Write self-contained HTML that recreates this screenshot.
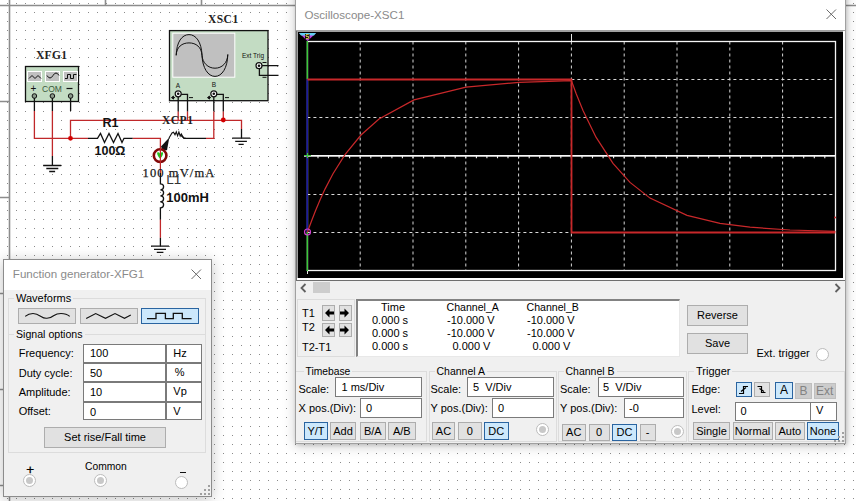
<!DOCTYPE html>
<html><head><meta charset="utf-8"><style>
*{box-sizing:border-box}
body{margin:0;width:856px;height:501px;overflow:hidden;position:relative;background:#fff;font-family:"Liberation Sans",sans-serif;color:#000}
.a{position:absolute;white-space:nowrap}
.t{position:absolute;white-space:nowrap;font-size:11px;line-height:13px}
.box{position:absolute;background:#fff;border:1px solid #7a7a7a}
.btn{position:absolute;background:#e1e1e1;border:1px solid #adadad;font-size:11px;text-align:center;white-space:nowrap}
.sel{background:#cce8fc;border-color:#2a64a0}
.grp{position:absolute;border:1px solid #dcdcdc}
.rad{position:absolute;width:13px;height:13px;border-radius:50%;border:1px solid #bcbcbc;background:#fff}
.rad.dis:after{content:"";position:absolute;left:2px;top:2px;width:7px;height:7px;border-radius:50%;background:#c8c8c8}
</style></head><body>
<svg class="a" style="left:0;top:0" width="856" height="501" viewBox="0 0 856 501">
<defs><pattern id="dots" x="7" y="3" width="9" height="9" patternUnits="userSpaceOnUse"><rect width="1" height="1" fill="#8a8a8a"/></pattern></defs>
<rect width="856" height="501" fill="url(#dots)"/>
<g stroke="#8c8c8c" stroke-width="1.6" fill="none">
<path d="M9.5 0V501M0 5.5H856M105.5 0V5.5M201.5 0V5.5M0 101.5H9.5M0 197.5H9.5M0 293.5H9.5M0 389.5H9.5M0 485.5H9.5"/>
</g>
<text x="36" y="59" font-family="'Liberation Serif'" font-weight="bold" font-size="11.5" letter-spacing="0.3" fill="#222">XFG1</text>
<rect x="25.5" y="66.5" width="53" height="35" fill="#c3dcc3" stroke="#111" stroke-width="1.3"/>
<g fill="#c0c0c0" stroke="#fff" stroke-width="1"><rect x="27.5" y="71.5" width="14" height="10"/><rect x="45.5" y="71.5" width="14" height="10"/><rect x="63.5" y="71.5" width="14" height="10"/></g>
<g fill="none" stroke="#111" stroke-width="1">
<path d="M29 78.5l3-3 3 3 3-3 3 3"/>
<path d="M47 75.5q3 5 6 0t6 0"/>
<path d="M65 78.5h2.5v-4h3v4h3v-4h3"/>
</g>
<text x="30.5" y="92" font-family="'Liberation Sans'" font-size="10" fill="#111">+</text>
<text x="42" y="91.5" font-family="'Liberation Sans'" font-size="8.5" fill="#3a5a3a">COM</text>
<path d="M66.5 88.5h6" stroke="#111" stroke-width="1.2"/>
<g fill="#8a9a8a" stroke="#111" stroke-width="1"><circle cx="34.4" cy="96" r="2.3"/><circle cx="52.4" cy="96" r="2.3"/><circle cx="70.6" cy="96" r="2.3"/></g>
<g fill="none" stroke-width="1.3">
<path stroke="#111" d="M34.4 98V111M52.4 98V111M70.6 98V111"/>
<path stroke="#c0282a" d="M34.4 111V138.3H88M52.4 111V156M70.5 138.3V120.3H241.5V129M132.7 138.3H160.4V148"/>
<path stroke="#111" d="M52.4 156V165.5M88 138.3H97.5L100.5 133.5L104.5 142.5L109 133.5L113.5 142.5L118 133.5L122 142.5L124 138.3H132.7"/>
<path stroke="#111" d="M43.2 165.5H61.2M46.3 168.5H58.3M49.2 171.5H55.1"/>
<path stroke="#111" d="M241.5 129V138.2M232.2 138.2H250.1M235.2 141.4H246.9M238.5 144.4H243.7"/>
<path stroke="#111" d="M178.2 96V111.6M187.5 94.4V111.6M178.2 94.4H187.5M213.8 96V111.6M223.3 94.4V111.6M213.8 94.4H223.3"/>
<path stroke="#c0282a" d="M178.2 111.6V120.3M187.5 111.6V120.3M223.3 111.6V120.3M213.8 111.6V138.3H206"/>
<path stroke="#111" d="M206 138.3H184.3L181 135.5"/>
<path stroke="#111" d="M160.4 208V219.7M160.4 237.7V246.2M151 246.2H169M154 249.4H166M156.8 252.4H163.4"/>
<path stroke="#111" d="M160.4 173V183.8q3.2 0 3.2 3q0 3-3.2 3q3.2 0 3.2 3q0 3-3.2 3q3.2 0 3.2 3q0 3-3.2 3q3.2 0 3.2 3q0 3-3.2 3V208"/>
</g>
<g stroke="#c0282a" stroke-width="1.3" fill="none"><path d="M160.4 219.7V237.7"/></g>
<circle cx="70.5" cy="138.3" r="2.4" fill="#d40000"/>
<circle cx="223.3" cy="120" r="2.4" fill="#d40000"/>
<path d="M169 138L172 133L173.5 132.2L175 134.8L176.3 131.8L177.6 135.8L178.9 132L180.2 136L181.3 134L183.7 138.3H186" fill="none" stroke="#111" stroke-width="1.1"/>
<path d="M169.3 137.6L161 146.6L162.5 150L167 150.2z" fill="#111"/>
<circle cx="160.1" cy="155.6" r="6.3" fill="#fff" stroke="#820808" stroke-width="2.6"/>
<path d="M157.2 152.6q1.5-.8 2.9 1.2q1.4-2 2.9-1.2q.6 2.5-2.9 6.2q-3.5-3.7-2.9-6.2z" fill="#1ec81e"/>
<path d="M160.4 148V173" stroke="#c0282a" stroke-width="1.2"/>
<text x="102.5" y="126.6" font-family="'Liberation Sans'" font-weight="bold" font-size="12.5" fill="#111">R1</text>
<text x="94.5" y="155.3" font-family="'Liberation Sans'" font-weight="bold" font-size="12.5" fill="#111">100Ω</text>
<text x="162" y="123.6" font-family="'Liberation Serif'" font-weight="bold" font-size="11.5" letter-spacing="0.5" fill="#222">XCP1</text>
<text x="142.6" y="176.7" font-family="'Liberation Serif'" font-size="12.5" letter-spacing="1.1" fill="#1a1a1a" stroke="#1a1a1a" stroke-width="0.25">100 mV/mA</text>
<text x="166.3" y="184.3" font-family="'Liberation Sans'" font-size="13.5" fill="#333">L1</text>
<text x="166.3" y="201.7" font-family="'Liberation Sans'" font-weight="bold" font-size="13" fill="#111">100mH</text>
<text x="207.9" y="22.5" font-family="'Liberation Serif'" font-weight="bold" font-size="11.5" letter-spacing="0.5" fill="#222">XSC1</text>
<rect x="169.5" y="30.6" width="98.5" height="70.1" fill="#c3dcc3" stroke="#111" stroke-width="1.3"/>
<rect x="172.8" y="33.2" width="62" height="44" fill="#c0c0c0" stroke="#fff" stroke-width="1"/>
<g fill="none" stroke="#111" stroke-width="1">
<path d="M176.2 55.3C176.5 42 182 34.6 189 34.6S201.5 42 202 55.3C202.5 68 208 76.4 215 76.4S227.5 68 227.8 54.5"/>
<path d="M176.2 55.3C176.5 47 182 42.9 189 42.9S201.5 47 202 55.3C202.5 63 208 68.2 215 68.2S227.5 63 227.8 54.5"/>
</g>
<text x="242" y="58" font-family="'Liberation Sans'" font-size="6.5" fill="#111">Ext Trig</text>
<text x="175.8" y="88" font-family="'Liberation Sans'" font-size="6.5" fill="#111">A</text>
<text x="211.8" y="87" font-family="'Liberation Sans'" font-size="6.5" fill="#111">B</text>
<g stroke="#111" stroke-width="1" fill="none">
<path d="M189 97.6h4M225 97.6h4M172 97.6h3M208 97.6h3M262.5 77.3h4M262.5 62.5h4"/><path d="M171.5 97.6l2-1.5v3z M207.5 97.6l2-1.5v3z" fill="#111"/>
<path d="M259 65.7H278.5M259.4 68V75.3H278.5M178.2 94.4H187.5V101M213.8 94.4H223.3V101M178.2 94V101M213.8 94V101" stroke-width="1.3"/>
</g>
<g fill="#fff" stroke="#111" stroke-width="1.2"><circle cx="178.2" cy="93.8" r="3"/><circle cx="213.8" cy="93.8" r="3"/><circle cx="259" cy="65.7" r="3"/></g>
<g fill="#111"><circle cx="178.2" cy="93.8" r="1.3"/><circle cx="213.8" cy="93.8" r="1.3"/><circle cx="259" cy="65.7" r="1.3"/></g>
</svg>
<div class="a" style="left:295px;top:-40px;width:551px;height:484px;background:#f0f0f0;border:1px solid #a0a0a0;box-shadow:1px 1px 4px rgba(0,0,0,0.16),0 2px 12px rgba(0,0,0,0.2)">
<div class="a" style="left:0;top:0;width:549px;height:70px;background:#fff"></div>
</div>
<div class="a" style="left:304.5px;top:8px;font-size:11.6px;color:#8a8a8a">Oscilloscope-XSC1</div>
<svg class="a" style="left:826px;top:9px" width="11" height="11"><path d="M0.5 0.5L10 10M10 0.5L0.5 10" stroke="#6a6a6a" stroke-width="1"/></svg>
<div class="a" style="left:296px;top:30px;width:550px;height:1px;background:#a0a0a0"></div>
<svg class="a" style="left:296px;top:31px" width="549" height="250" viewBox="296 31 549 250">
<rect x="296" y="31" width="549" height="250" fill="#f0f0f0"/>
<rect x="296" y="31" width="549" height="249" fill="#fff"/>
<rect x="296" y="31" width="547" height="247" fill="#a0a0a0"/>
<rect x="298" y="32" width="545" height="246" fill="#000"/>
<rect x="296" y="31" width="1" height="249" fill="#6e6e6e"/>
<rect x="296" y="280" width="549" height="1" fill="#6e6e6e"/>
<g stroke="#d8d8d8" stroke-width="1" stroke-dasharray="3 3" fill="none">
<path d="M360.2 41.5V270M413.0 41.5V270M465.8 41.5V270M518.6 41.5V270M571.4 41.5V270M624.2 41.5V270M677.0 41.5V270M729.8 41.5V270M782.6 41.5V270"/>
<path d="M307.4 79.5H835.4M307.4 117.5H835.4M307.4 194.5H835.4M307.4 232.5H835.4"/>
</g>
<rect x="307.5" y="41.5" width="528" height="229" fill="none" stroke="#f4f4f4" stroke-width="1.3"/>
<path d="M571.5 34V41M307.5 270V274" stroke="#e8e8e8" stroke-width="1"/>
<rect x="304" y="155" width="531.5" height="1" fill="#fafafa"/><rect x="304" y="156" width="531.5" height="1" fill="#b0b0b0"/>
<path d="M307.4 156v2.3M318.0 156v2.3M328.5 156v2.3M339.1 156v2.3M349.6 156v2.3M360.2 156v2.3M370.8 156v2.3M381.3 156v2.3M391.9 156v2.3M402.4 156v2.3M413.0 156v2.3M423.6 156v2.3M434.1 156v2.3M444.7 156v2.3M455.2 156v2.3M465.8 156v2.3M476.4 156v2.3M486.9 156v2.3M497.5 156v2.3M508.0 156v2.3M518.6 156v2.3M529.2 156v2.3M539.7 156v2.3M550.3 156v2.3M560.8 156v2.3M571.4 156v2.3M582.0 156v2.3M592.5 156v2.3M603.1 156v2.3M613.6 156v2.3M624.2 156v2.3M634.8 156v2.3M645.3 156v2.3M655.9 156v2.3M666.4 156v2.3M677.0 156v2.3M687.6 156v2.3M698.1 156v2.3M708.7 156v2.3M719.2 156v2.3M729.8 156v2.3M740.4 156v2.3M750.9 156v2.3M761.5 156v2.3M772.0 156v2.3M782.6 156v2.3M793.2 156v2.3M803.7 156v2.3M814.3 156v2.3M824.8 156v2.3M835.4 156v2.3" stroke="#f0f0f0" stroke-width="1.1"/>
<path d="M307.3 41V79M307.3 232V271" stroke="#3cc83c" stroke-width="1.4"/>
<path d="M307.2 79V232" stroke="#1c1c9c" stroke-width="1.6"/>
<path d="M304 155.5h7M307.5 153v5" stroke="#3cc83c" stroke-width="1"/>
<path d="M307.4 79.5H571.5V232.5H835.4" fill="none" stroke="#c8282a" stroke-width="1.8"/>
<polyline points="307.4,232.4 309.0,227.8 312.0,219.7 315.5,210.7 320.0,200.0 325.0,189.1 333.0,173.7 345.0,154.6 361.0,135.0 379.0,119.0 414.0,99.9 466.0,87.2 519.0,82.4 571.4,80.6 576.0,93.3 583.0,110.6 596.0,137.2 613.0,163.4 630.0,182.4 650.0,198.1 687.0,215.4 720.0,223.3 750.0,227.2 790.0,230.0 835.4,231.4" fill="none" stroke="#c8282a" stroke-width="1.2"/>
<circle cx="307.5" cy="232" r="3" fill="none" stroke="#d040d0" stroke-width="1.2"/>
<path d="M299 33H316L307.5 41z" fill="#c040e0"/>
<path d="M299 33H316L314 35.5H301z" fill="#60d0f0"/>
<rect x="305" y="34" width="4.5" height="5" fill="#000"/>
<path d="M308.8 34.6h-2.8v1.8h2.6v2h-2.8" stroke="#f0e060" stroke-width="0.9" fill="none"/>
<circle cx="835" cy="217.5" r="1" fill="#c8282a"/>
</svg>
<svg class="a" style="left:296px;top:280px" width="550" height="18">
<path d="M9.5 4L5.5 8L9.5 12" stroke="#606060" stroke-width="1.8" fill="none"/>
<rect x="17" y="2" width="17" height="11" fill="#cdcdcd"/>
<path d="M539.5 4L543.5 8L539.5 12" stroke="#606060" stroke-width="1.8" fill="none"/>
</svg>
<div class="grp" style="left:296.5px;top:298.5px;width:58px;height:58px"></div>
<div class="t" style="left:302px;top:307.3px">T1</div>
<div class="t" style="left:302px;top:321px">T2</div>
<div class="t" style="left:302px;top:340.5px">T2-T1</div>
<div class="btn" style="left:322px;top:305px;width:13px;height:16px"></div><svg class="a" style="left:322px;top:306px" width="13" height="14"><path d="M3 7L7.5 2.5V5.5H12V8.5H7.5V11.5z" fill="#000"/></svg><div class="btn" style="left:339px;top:305px;width:13px;height:16px"></div><svg class="a" style="left:339px;top:306px" width="13" height="14"><path d="M10 7L5.5 2.5V5.5H1V8.5H5.5V11.5z" fill="#000"/></svg><div class="btn" style="left:322px;top:323.3px;width:13px;height:14px"></div><svg class="a" style="left:322px;top:323.3px" width="13" height="14"><path d="M3 7L7.5 2.5V5.5H12V8.5H7.5V11.5z" fill="#000"/></svg><div class="btn" style="left:339px;top:323.3px;width:13px;height:14px"></div><svg class="a" style="left:339px;top:323.3px" width="13" height="14"><path d="M10 7L5.5 2.5V5.5H1V8.5H5.5V11.5z" fill="#000"/></svg>
<div class="a" style="left:355.5px;top:298.5px;width:324px;height:58px;background:#fff;border-top:2px solid #828282;border-left:2px solid #828282;border-right:1px solid #e8e8e8;border-bottom:1px solid #e8e8e8"></div>
<div class="t" style="left:381px;top:300.5px">Time</div>
<div class="t" style="left:372px;top:314.3px">0.000 s</div>
<div class="t" style="left:372px;top:327.2px">0.000 s</div>
<div class="t" style="left:372px;top:340.3px">0.000 s</div>
<div class="t" style="left:446.5px;top:300.5px;font-size:10.6px">Channel_A</div>
<div class="t" style="left:447px;top:314.3px">-10.000 V</div>
<div class="t" style="left:447px;top:327.2px">-10.000 V</div>
<div class="t" style="left:452.5px;top:340.3px">0.000 V</div>
<div class="t" style="left:526.5px;top:300.5px;font-size:10.6px">Channel_B</div>
<div class="t" style="left:527px;top:314.3px">-10.000 V</div>
<div class="t" style="left:527px;top:327.2px">-10.000 V</div>
<div class="t" style="left:532.5px;top:340.3px">0.000 V</div>
<div class="btn" style="left:687px;top:305px;width:61px;height:21px;line-height:19px">Reverse</div>
<div class="btn" style="left:687px;top:333px;width:61px;height:21px;line-height:19px">Save</div>
<div class="t" style="left:756.5px;top:347px">Ext. trigger</div>
<div class="rad" style="left:816px;top:348px"></div>
<div class="grp" style="left:296px;top:370.5px;width:131px;height:71px;border-left:none"></div><div class="t" style="left:303.5px;top:364.5px;background:#f0f0f0;padding:0 2px"><span style="font-size:10.3px">Timebase</span></div><div class="grp" style="left:428.5px;top:370.5px;width:128.5px;height:71px;"></div><div class="t" style="left:434.5px;top:364.5px;background:#f0f0f0;padding:0 2px"><span style="font-size:10.5px">Channel A</span></div><div class="grp" style="left:557.5px;top:370.5px;width:129px;height:71px;"></div><div class="t" style="left:563.5px;top:364.5px;background:#f0f0f0;padding:0 2px"><span style="font-size:10.5px">Channel B</span></div><div class="grp" style="left:688px;top:370.5px;width:157px;height:71px;"></div><div class="t" style="left:694px;top:364.5px;background:#f0f0f0;padding:0 2px">Trigger</div>
<div class="t" style="left:298.5px;top:382.8px">Scale:</div>
<div class="box" style="left:335px;top:377px;width:87px;height:20px"></div>
<div class="t" style="left:341.5px;top:381px">1 ms/Div</div>
<div class="t" style="left:298.5px;top:402px">X pos.(Div):</div>
<div class="box" style="left:360px;top:398px;width:62px;height:20px"></div>
<div class="t" style="left:366px;top:402px">0</div>
<div class="btn sel" style="left:304px;top:422px;width:24px;height:18px;line-height:16px">Y/T</div>
<div class="btn" style="left:330px;top:422px;width:26px;height:18px;line-height:16px">Add</div>
<div class="btn" style="left:360px;top:422px;width:25.5px;height:18px;line-height:16px">B/A</div>
<div class="btn" style="left:388px;top:422px;width:27.5px;height:18px;line-height:16px">A/B</div>

<div class="t" style="left:430.5px;top:382.8px">Scale:</div>
<div class="box" style="left:467px;top:377px;width:87px;height:20px"></div>
<div class="t" style="left:473px;top:381px">5&nbsp; V/Div</div>
<div class="t" style="left:430.5px;top:402px">Y pos.(Div):</div>
<div class="box" style="left:492px;top:398px;width:62px;height:20px"></div>
<div class="t" style="left:498px;top:402px">0</div>
<div class="btn" style="left:432px;top:422px;width:23px;height:17.5px;line-height:16px">AC</div>
<div class="btn" style="left:457.5px;top:422px;width:24.5px;height:17.5px;line-height:16px">0</div>
<div class="btn sel" style="left:484px;top:422px;width:24.5px;height:17.5px;line-height:16px">DC</div>
<div class="rad dis" style="left:536px;top:423px"></div>

<div class="t" style="left:560px;top:382.8px">Scale:</div>
<div class="box" style="left:597.5px;top:377px;width:86.5px;height:20px"></div>
<div class="t" style="left:603px;top:381px">5&nbsp; V/Div</div>
<div class="t" style="left:560px;top:402px">Y pos.(Div):</div>
<div class="box" style="left:623.5px;top:398px;width:60.5px;height:20px"></div>
<div class="t" style="left:629px;top:402px">-0</div>
<div class="btn" style="left:562px;top:424px;width:23.5px;height:17px;line-height:15px">AC</div>
<div class="btn" style="left:588.5px;top:424px;width:21px;height:17px;line-height:15px">0</div>
<div class="btn sel" style="left:612px;top:424px;width:25px;height:17px;line-height:15px">DC</div>
<div class="btn" style="left:639.5px;top:424px;width:16px;height:17px;line-height:15px">-</div>
<div class="rad dis" style="left:671px;top:425px"></div>

<div class="t" style="left:691.5px;top:382.5px">Edge:</div>
<div class="btn sel" style="left:736px;top:382px;width:16px;height:15px"></div>
<div class="btn" style="left:754px;top:382px;width:16px;height:15px"></div>
<svg class="a" style="left:736px;top:378px" width="34" height="20"><path d="M3 15.5H7.5V8.5H12M5 13.5L10 9.5" stroke="#000" stroke-width="1.2" fill="none"/><path d="M21.5 8.5H25.5V14.5H29.5M23.5 10.5L28 13.5" stroke="#000" stroke-width="1.2" fill="none"/></svg>
<div class="btn sel" style="left:775px;top:382px;width:18px;height:16.5px;line-height:15px;font-size:12px">A</div>
<div class="btn" style="left:795px;top:382.5px;width:17px;height:16px;line-height:15px;font-size:12px;background:#cccccc;border-color:#bfbfbf;color:#838383">B</div>
<div class="btn" style="left:814px;top:382.5px;width:21.5px;height:16px;line-height:15px;font-size:12px;background:#cccccc;border-color:#bfbfbf;color:#838383">Ext</div>
<div class="t" style="left:691.5px;top:403px">Level:</div>
<div class="box" style="left:735px;top:402px;width:76px;height:19px"></div>
<div class="box" style="left:809.5px;top:402px;width:27.5px;height:19px"></div>
<div class="t" style="left:740.5px;top:405px">0</div>
<div class="t" style="left:816px;top:404px">V</div>
<div class="btn" style="left:693px;top:422px;width:37px;height:17.5px;line-height:16px">Single</div>
<div class="btn" style="left:732.5px;top:422px;width:40px;height:17.5px;line-height:16px">Normal</div>
<div class="btn" style="left:775px;top:422px;width:29.5px;height:17.5px;line-height:16px">Auto</div>
<div class="btn sel" style="left:807px;top:422px;width:32px;height:17.5px;line-height:16px">None</div>
<svg class="a" style="left:834px;top:431px" width="12" height="12"><g fill="#a0a0a0"><rect x="8" y="1" width="2" height="2"/><rect x="4" y="5" width="2" height="2"/><rect x="8" y="5" width="2" height="2"/><rect x="0" y="9" width="2" height="2"/><rect x="4" y="9" width="2" height="2"/><rect x="8" y="9" width="2" height="2"/></g></svg>
<div class="a" style="left:3px;top:259px;width:209px;height:238px;background:#f0f0f0;border:1px solid #8c8c8c;box-shadow:0 2px 13px rgba(0,0,0,0.24)">
<div class="a" style="left:0;top:0;width:207px;height:29.5px;background:#fff"></div>
</div>
<div class="a" style="left:12.8px;top:266.5px;font-size:11.6px;color:#8a8a8a">Function generator-XFG1</div>
<svg class="a" style="left:191px;top:269px" width="11" height="11"><path d="M0.5 0.5L10 10M10 0.5L0.5 10" stroke="#6a6a6a" stroke-width="1"/></svg>
<div class="grp" style="left:8px;top:298px;width:198px;height:36px;border-bottom:none"></div>
<div class="t" style="left:14px;top:292px;background:#f0f0f0;padding:0 2px">Waveforms</div>
<div class="btn" style="left:18px;top:308px;width:57.5px;height:16px"></div>
<div class="btn" style="left:80px;top:308px;width:57.5px;height:16px"></div>
<div class="btn sel" style="left:141px;top:308px;width:58px;height:16px"></div>
<svg class="a" style="left:0;top:300px" width="210" height="30">
<path d="M25.2 16.4C28 14 30 13.5 33 13.5S38 14.5 41 16.5 44 18.3 47 18.3 52 17 54 15.5 58 13.5 61 13.5 67 14 69.7 16.4" stroke="#111" stroke-width="1.1" fill="none"/>
<path d="M86.2 18.6L95.7 13.5L105.5 18.3L115 13.5L124.5 18.3L130.8 15" stroke="#111" stroke-width="1.1" fill="none"/>
<path d="M147 18.6H156V13.4H165.4V18.6H173.3V13.4H182.3V18.6H191.6" stroke="#111" stroke-width="1.3" fill="none"/>
</svg>
<div class="grp" style="left:8px;top:333.5px;width:198px;height:119px"></div>
<div class="t" style="left:14px;top:327.5px;background:#f0f0f0;padding:0 2px;font-size:10.6px">Signal options</div>
<div class="t" style="left:18.7px;top:347.0px">Frequency:</div><div class="box" style="left:83.3px;top:343.5px;width:82.7px;height:19.5px;border-width:1.5px"></div><div class="box" style="left:165.7px;top:343.5px;width:36.3px;height:19.5px;border-width:1.5px"></div><div class="t" style="left:90px;top:347.3px">100</div><div class="t" style="left:173.3px;top:346.7px">Hz</div><div class="t" style="left:18.7px;top:366.5px">Duty cycle:</div><div class="box" style="left:83.3px;top:363px;width:82.7px;height:19px;border-width:1.5px"></div><div class="box" style="left:165.7px;top:363px;width:36.3px;height:19px;border-width:1.5px"></div><div class="t" style="left:90px;top:366.8px">50</div><div class="t" style="left:174.7px;top:366.2px">%</div><div class="t" style="left:18.7px;top:385.5px">Amplitude:</div><div class="box" style="left:83.3px;top:382px;width:82.7px;height:19.69999999999999px;border-width:1.5px"></div><div class="box" style="left:165.7px;top:382px;width:36.3px;height:19.69999999999999px;border-width:1.5px"></div><div class="t" style="left:90px;top:385.8px">10</div><div class="t" style="left:173.3px;top:385.2px">Vp</div><div class="t" style="left:18.7px;top:405.2px">Offset:</div><div class="box" style="left:83.3px;top:401.7px;width:82.7px;height:18.600000000000023px;border-width:1.5px"></div><div class="box" style="left:165.7px;top:401.7px;width:36.3px;height:18.600000000000023px;border-width:1.5px"></div><div class="t" style="left:90px;top:405.5px">0</div><div class="t" style="left:173.3px;top:404.9px">V</div><div class="btn" style="left:44.3px;top:427px;width:121.5px;height:20.5px;line-height:18.5px">Set rise/Fall time</div>
<div class="t" style="left:26.3px;top:461.8px;font-size:13.5px;line-height:15px;-webkit-text-stroke:0.3px #000">+</div>
<div class="t" style="left:85px;top:459.5px;font-size:10.3px">Common</div>
<div class="a" style="left:179.5px;top:472px;width:6px;height:1px;background:#111"></div>
<div class="rad dis" style="left:23px;top:473.7px"></div>
<div class="rad dis" style="left:94px;top:473.7px"></div>
<div class="rad" style="left:175px;top:476px"></div>
<svg class="a" style="left:200px;top:484px" width="12" height="12"><g fill="#a0a0a0"><rect x="8" y="1" width="2" height="2"/><rect x="4" y="5" width="2" height="2"/><rect x="8" y="5" width="2" height="2"/><rect x="0" y="9" width="2" height="2"/><rect x="4" y="9" width="2" height="2"/><rect x="8" y="9" width="2" height="2"/></g></svg>
</body></html>
